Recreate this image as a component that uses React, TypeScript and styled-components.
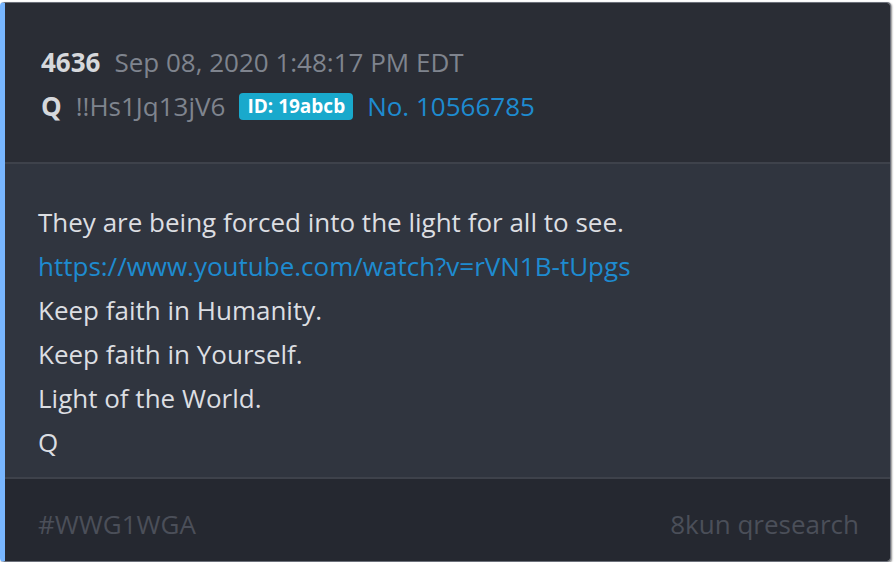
import React from 'react'
import styled, { createGlobalStyle } from 'styled-components'

const FONT = `"Open Sans", "Noto Sans", sans-serif`

const GlobalStyle = createGlobalStyle`
  html, body {
    margin: 0;
    padding: 0;
    background: #ffffff;
  }
  body {
    font-family: ${FONT};
  }
`

const Card = styled.article`
  box-sizing: border-box;
  margin: 2px 3px 0 0;
  width: 891px;
  height: 560px;
  display: flex;
  flex-direction: column;
  border: 1px solid #6c707a;
  border-left: 5px solid #78b6ff;
  border-radius: 4px;
  overflow: hidden;
  box-shadow: 1px 1px 2px rgba(0, 0, 0, 0.45);
`

const Header = styled.header`
  height: 161px;
  flex-shrink: 0;
  box-sizing: border-box;
  padding: 37px 0 0 36px;
  background: #2a2d35;
  border-bottom: 2px solid #3e424b;
  display: flex;
  flex-direction: column;
`

const MetaRow = styled.div`
  display: flex;
  align-items: center;
  height: 44px;
  gap: 14px;
`

const Strong = styled.span`
  font-size: 26px;
  font-weight: 700;
  color: #d6d8dc;
`

const Muted = styled.span`
  font-size: 26px;
  color: #7f848e;
`

const Badge = styled.span`
  background: #19a9cc;
  color: #ffffff;
  font-size: 19px;
  font-weight: 700;
  padding: 2px 8px;
  border-radius: 4px;
  line-height: 23px;
`

const PostLink = styled.a`
  color: #1e8bd0;
  font-size: 26px;
  text-decoration: none;
`

const Body = styled.section`
  flex: 1;
  background: #30353f;
  padding: 36px 0 0 33px;
  border-bottom: 2px solid #3e424b;
`

const Line = styled.div`
  font-size: 26px;
  line-height: 44px;
  color: #dcdee2;
`

const Footer = styled.footer`
  height: 82px;
  flex-shrink: 0;
  box-sizing: border-box;
  background: #252830;
  display: flex;
  align-items: center;
  justify-content: space-between;
  padding: 8px 31px 0 33px;
  font-size: 26px;
  color: #4b4f59;
`

const lines = [
  'They are being forced into the light for all to see.',
  null,
  'Keep faith in Humanity.',
  'Keep faith in Yourself.',
  'Light of the World.',
  'Q',
]

export default function App(): React.ReactElement {
  return (
    <>
      <GlobalStyle />
      <Card>
        <Header>
          <MetaRow>
            <Strong>4636</Strong>
            <Muted>Sep 08, 2020 1:48:17 PM EDT</Muted>
          </MetaRow>
          <MetaRow>
            <Strong>Q</Strong>
            <Muted>!!Hs1Jq13jV6</Muted>
            <Badge>ID: 19abcb</Badge>
            <PostLink href="#">No. 10566785</PostLink>
          </MetaRow>
        </Header>
        <Body>
          {lines.map((text, i) =>
            text === null ? (
              <Line key={i}>
                <PostLink href="#">https://www.youtube.com/watch?v=rVN1B-tUpgs</PostLink>
              </Line>
            ) : (
              <Line key={i}>{text}</Line>
            )
          )}
        </Body>
        <Footer>
          <span>#WWG1WGA</span>
          <span>8kun qresearch</span>
        </Footer>
      </Card>
    </>
  )
}
